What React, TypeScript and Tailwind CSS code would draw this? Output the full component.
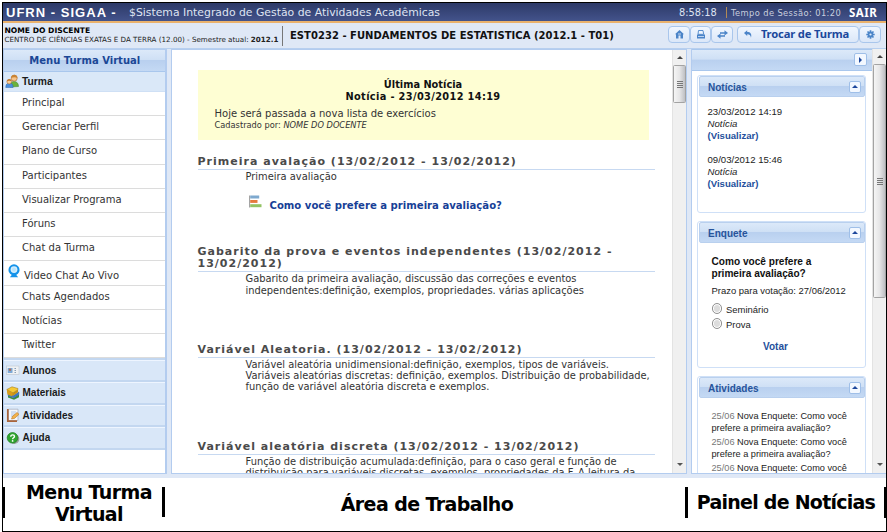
import type { ReactNode } from "react";

const SANS = "font-['Liberation_Sans',Arial,sans-serif]";

const menuTop = ["Principal", "Gerenciar Perfil", "Plano de Curso", "Participantes", "Visualizar Programa", "Fóruns", "Chat da Turma"];
const menuBottom = ["Chats Agendados", "Notícias", "Twitter"];

function MenuItem({ children }: { children: ReactNode }) {
  return (
    <li className="h-[24.2px] shrink-0 whitespace-nowrap border-b-[1.5px] border-[#dcdcdc] pl-[18px] text-[10px] leading-[22px] text-[#333]">
      {children}
    </li>
  );
}

function WebcamIcon() {
  return (
    <svg width="12" height="14" viewBox="0 0 13 15">
      <path d="M2 14.2 4.2 11.5h4.6l2.2 2.7z" fill="#1593ea" />
      <circle cx="6.5" cy="6.3" r="6" fill="#1593ea" />
      <circle cx="6.5" cy="6" r="3.7" fill="#d4eefd" />
      <circle cx="6.5" cy="6" r="2.3" fill="#b9e3fb" />
    </svg>
  );
}

function PeopleIcon() {
  return (
    <svg width="14" height="14" viewBox="0 0 14 14">
      <path d="M5 13c0-4 1.5-5.500 4-5.500s4.500 1.500 4.500 5z" fill="#6bb23c" stroke="#3f8228" strokeWidth=".5" />
      <circle cx="9.200" cy="4.200" r="3" fill="#f7c489" stroke="#a7652d" strokeWidth=".6" />
      <path d="M6 4c0-4.500 6.500-4.500 6.500 0C11 3 8 3 6 4z" fill="#c98434" />
      <path d="M.8 13.600c0-3.500 1.500-4.500 3.600-4.500s3.700 1 3.700 4.500z" fill="#4b8fdd" stroke="#2b62a8" strokeWidth=".5" />
      <circle cx="4.200" cy="7.700" r="2.300" fill="#f9cd98" stroke="#a7652d" strokeWidth=".5" />
      <path d="M1.800 7.500c0-3.500 5-3.500 5 0-1.500-.9-3.500-.9-5 0z" fill="#c77a2b" />
    </svg>
  );
}

function CardIcon() {
  return (
    <svg width="14" height="14" viewBox="0 0 14 14">
      <rect x=".5" y="3" width="12.500" height="8.500" fill="#eef1f4" stroke="#c3cbd4" strokeWidth=".7" />
      <rect x="1.700" y="5" width="4.800" height="5" fill="#7da9d6" />
      <circle cx="4" cy="6.800" r="1.200" fill="#b0705b" />
      <path d="M8.500 5.500h1.500M8.500 7.500h1.500M8.500 9.500h1.500" stroke="#7c93ad" strokeWidth=".9" />
    </svg>
  );
}

function BooksIcon() {
  return (
    <svg width="14" height="14" viewBox="0 0 14 14">
      <path d="M2 9.500 7.500 12 13 8.500v2.800L8 13.800 2 11.500z" fill="#3c8f3d" />
      <path d="M2 7 7.500 9.500 12.800 6v2.700L7.800 12 2 9.500z" fill="#3c78c4" stroke="#235291" strokeWidth=".4" />
      <path d="M.8 3.500 7 6.800 12 3.500v2.800L7.500 9.500 1.500 7z" fill="#c99210" />
      <path d="M.8 3.500 6 .8l6 1.700v1L7 6.800z" fill="#f5c935" stroke="#9d7010" strokeWidth=".5" />
      <path d="M.8 3.500 1.500 8.500 6.500 10.500V6.800z" fill="#d79d19" />
    </svg>
  );
}

function NotepadIcon() {
  return (
    <svg width="14" height="14" viewBox="0 0 14 14">
      <path d="M2.500 1.200h9.500v11.300H2.500z" fill="#f4f6fa" stroke="#a9b3c2" strokeWidth=".8" />
      <path d="M1.800 1v12.200h9.200" fill="none" stroke="#a9643b" strokeWidth="1.700" />
      <path d="M5 4h5M5 6h4M5 8h3" stroke="#9dbce4" strokeWidth=".8" />
      <path d="M5.500 11 6.500 8.300 11 4.500l2 1.800L8.500 10.400z" fill="#f3b34b" stroke="#bb7928" strokeWidth=".6" />
    </svg>
  );
}

function HelpIcon() {
  return (
    <svg width="14" height="14" viewBox="0 0 14 14">
      <circle cx="8.300" cy="8" r="5" fill="#98a19a" />
      <circle cx="6.500" cy="6.800" r="5.300" fill="#2fa52f" stroke="#1f7d22" strokeWidth=".7" />
      <path d="M4.800 5.700c0-2.600 3.700-2.300 3.700-.2 0 1.300-1.900 1.300-1.900 2.700" fill="none" stroke="#fff" strokeWidth="1.400" />
      <circle cx="6.600" cy="9.900" r=".85" fill="#fff" />
    </svg>
  );
}

function PollIcon() {
  return (
    <svg width="13" height="13" viewBox="0 0 13 13">
      <path d="M.6.500v12" stroke="#8e8e8e" strokeWidth=".9" />
      <rect x="1.200" y=".5" width="9" height="3" fill="#7ea9cf" />
      <rect x="1.200" y="5" width="7.300" height="2.900" fill="#e5793c" />
      <rect x="1.200" y="9.200" width="11.300" height="3" fill="#93c364" />
    </svg>
  );
}

function Accordion({ icon, label }: { icon: ReactNode; label: string }) {
  return (
    <div className={`flex h-[22.5px] shrink-0 items-center border-t-[1.5px] border-b-2 border-t-[#eef5ff] border-b-[#c3d7f0] bg-[#d9e7f8] pl-[2px] text-[10px] font-bold text-[#1b1b1b] ${SANS}`}>
      <span className="w-[16.5px]">{icon}</span>
      <span className="whitespace-nowrap">{label}</span>
    </div>
  );
}

function Scrollbar({ thumb }: { thumb: string }) {
  return (
    <div className="flex w-[14px] shrink-0 flex-col items-center border-l border-[#e3e3e3] bg-[#f0f0f0]">
      <div className="flex h-[15px] w-full shrink-0 items-center justify-center">
        <svg width="6" height="3" viewBox="0 0 6 3"><path d="M0 3 3 0l3 3z" fill="#444" /></svg>
      </div>
      <div className={`flex w-[13px] shrink-0 flex-col items-center justify-center gap-px rounded-[1.5px] border border-[#a3a3a3] bg-gradient-to-r from-[#f5f5f5] via-[#e6e6e7] to-[#bfc0c4] ${thumb}`}>
        {[0, 1, 2, 3].map((i) => (
          <span key={i} className="h-px w-[6px] bg-[#777]" />
        ))}
      </div>
      <div className="flex-1" />
      <div className="flex h-[16px] w-full shrink-0 items-center justify-center">
        <svg width="6" height="3" viewBox="0 0 6 3"><path d="M0 0h6L3 3z" fill="#555" /></svg>
      </div>
    </div>
  );
}

const HEADER_BG = "bg-[linear-gradient(to_bottom,#dce9f9_0%,#cfe0f5_46%,#b9d0ef_50%,#c4d9f4_100%)]";

function Card({ title, className, children }: { title: string; className: string; children?: ReactNode }) {
  return (
    <section className={`shrink-0 overflow-hidden rounded-[3px] border-[1.5px] border-[#cfe0f7] bg-white ${className}`}>
      <h3 className={`mx-[0.5px] mt-[0.5px] flex h-[21px] items-center rounded-[2px] border border-[#b9d0ee] pl-[8.5px] pr-[3px] text-[10px] font-bold text-[#27549b] ${HEADER_BG} ${SANS}`}>
        <span className="flex-1 pt-px">{title}</span>
        <span className="flex h-[12px] w-[12px] items-center justify-center rounded-[2px] border border-[#9fbfe8] bg-[#f3f8ff]">
          <svg width="6" height="3" viewBox="0 0 6 3"><path d="M0 3 3 0l3 3z" fill="#1d479c" /></svg>
        </span>
      </h3>
      {children}
    </section>
  );
}

function ToolButton({ children, className }: { children: ReactNode; className: string }) {
  return (
    <span className={`flex h-[17.5px] shrink-0 items-center justify-center rounded-[4px] border border-[#a9c6ec] bg-gradient-to-b from-[#f0f6ff] to-[#dbe7f8] ${className}`}>
      {children}
    </span>
  );
}

function Section({ title, className, children }: { title: ReactNode; className: string; children: ReactNode }) {
  return (
    <section className={`shrink-0 ${className}`}>
      <h2 className="whitespace-nowrap border-b border-[#c7d9f1] pb-px text-[11px] font-bold leading-[12.2px] tracking-[1.01px] text-[#4a4a4a]">{title}</h2>
      <div className="whitespace-nowrap pl-[48px] pt-px text-[9.9px] leading-[11.2px] text-[#333]">{children}</div>
    </section>
  );
}

function Activity() {
  return (
    <p className="h-[26px]">
      <span className="text-[#777]">25/06</span> Nova Enquete: Como você<br />prefere a primeira avaliação?
    </p>
  );
}

export default function App() {
  return (
    <div className="h-[532px] w-[887px] overflow-hidden bg-white pl-[2px] pt-[2px] font-['DejaVu_Sans',Verdana,sans-serif]">
      <div className="flex h-[530px] w-[885px] flex-col border-[1.5px] border-black">
        <header className="flex h-[17.5px] shrink-0 items-center whitespace-nowrap bg-gradient-to-b from-[#2d3a68] to-[#43538b] pt-[2px] text-white">
          <b className={`w-[126px] pl-[3px] text-[13px] tracking-[1.02px] ${SANS}`}>UFRN - SIGAA -</b>
          <span className="flex-1 pt-px text-[10.85px] text-[#dfe4f2]">$Sistema Integrado de Gestão de Atividades Acadêmicas</span>
          <span className="w-[47px] pt-px text-[9.8px] text-[#dfe4f2]">8:58:18</span>
          <span className="h-[11px] w-[5px] border-l border-[#b28a55]" />
          <span className="w-[118px] pt-px text-[8.3px] tracking-[0.4px] text-[#c9cfdf]">Tempo de Sessão: 01:20</span>
          <b className="w-[37px] font-['Noto_Sans',sans-serif] text-[11.5px] leading-[14px] tracking-[0.5px]">SAIR</b>
        </header>
        <div className="h-[2px] shrink-0 bg-[#eab26d]" />

        <div className="flex h-[26.5px] shrink-0 items-start border-b border-[#b7cfef] bg-[#dfe8f6] pt-[3px]">
          <div className="h-[20px] w-[280px] shrink-0 whitespace-nowrap border-r border-[#777] pl-[1.5px] text-[#222]">
            <div className="text-[7.6px] font-bold leading-[9px] text-black">NOME DO DISCENTE</div>
            <div className="text-[7.15px] leading-[10px]">CENTRO DE CIÊNCIAS EXATAS E DA TERRA (12.00) - Semestre atual: <b>2012.1</b></div>
          </div>
          <div className="flex-1 whitespace-nowrap pl-[7px] text-[10px] font-bold leading-[20px] tracking-[0.03px] text-[#111]">EST0232 - FUNDAMENTOS DE ESTATISTICA (2012.1 - T01)</div>
          <div className="flex pr-[5px]">
            <ToolButton className="w-[22px]">
              <svg width="9" height="9" viewBox="0 0 9 9"><path d="M4.500 0 0 4.200h1V8.500h2.500V5.500h2v3H8V4.200h1z" fill="#4b84c8" /><path d="M3 4h3" stroke="#eaf2fd" strokeWidth=".8" /></svg>
            </ToolButton>
            <ToolButton className="w-[21px]">
              <svg width="10" height="9" viewBox="0 0 10 9"><path d="M2.500.500h4.500l.7 3.800H2z" fill="#eef5ff" stroke="#4b84c8" strokeWidth=".9" /><path d="M1 4.500h8V8.500H1z" fill="#4b84c8" /><path d="M2 6.500h6" stroke="#dce9fa" strokeWidth=".8" /></svg>
            </ToolButton>
            <ToolButton className="mr-[4px] w-[22px]">
              <svg width="11" height="9" viewBox="0 0 11 9"><path d="M3 2.200h4.500V.3L11 3 7.500 5.500V3.800H3zM8 6.800H3.500V8.700L0 6l3.500-2.500v1.700H8z" fill="#4b84c8" /></svg>
            </ToolButton>
            <ToolButton className="w-[122px] gap-[9px] whitespace-nowrap pr-[3px]">
              <svg width="8" height="8" viewBox="0 0 8 8"><path d="M0 3 3.200.3v1.800C6.500 2.100 8 4 7 7.700 6.500 5.200 5.500 4.300 3.200 4.300V6z" fill="#4b84c8" /></svg>
              <b className="font-['Noto_Sans',sans-serif] text-[11.200px] tracking-[-0.15px] text-[#1b489c]">Trocar de Turma</b>
            </ToolButton>
            <ToolButton className="w-[22px]">
              <svg width="9" height="9" viewBox="0 0 9 9"><path d="M4.500.3v8.400M.3 4.500h8.400M1.500 1.500l6 6M7.500 1.500l-6 6" stroke="#4b84c8" strokeWidth="1.700" /><circle cx="4.500" cy="4.500" r="2.900" fill="#4b84c8" /><circle cx="4.500" cy="4.500" r="1.100" fill="#e4eefb" /></svg>
            </ToolButton>
          </div>
        </div>

        <main className="flex h-[428.5px] shrink-0 gap-[4px] bg-[#dfe8f6] pb-[4px]">
          <aside className="flex w-[163.5px] shrink-0 flex-col border border-r-2 border-[#b3ccef] bg-white">
            <h2 className={`flex h-[21.5px] shrink-0 items-center justify-center border-b border-[#a9c7ed] pl-px text-[10px] font-bold text-[#1b4796] ${HEADER_BG}`}>Menu Turma Virtual</h2>
            <div className={`flex h-[20.5px] shrink-0 items-center border-b border-[#cfe0f5] bg-[#dae8f8] text-[10.3px] font-bold text-[#1b1b1b] ${SANS}`}>
              <span className="w-[18px] pl-[0.5px]"><PeopleIcon /></span><span className="pt-px">Turma</span>
            </div>
            <ul className="flex flex-col">
              {menuTop.map((m) => <MenuItem key={m}>{m}</MenuItem>)}
              <li className="flex h-[24.2px] border-b-[1.5px] border-[#dcdcdc] pl-[3.5px] text-[10px] leading-[30px] text-[#333]">
                <span className="w-[16.5px] pt-[3px]"><WebcamIcon /></span>Video Chat Ao Vivo
              </li>
              {menuBottom.map((m) => <MenuItem key={m}>{m}</MenuItem>)}
            </ul>
            <div className="h-[1.5px] shrink-0 bg-[#c3d7f0]" />
            <Accordion icon={<CardIcon />} label="Alunos" />
            <Accordion icon={<BooksIcon />} label="Materiais" />
            <Accordion icon={<NotepadIcon />} label="Atividades" />
            <Accordion icon={<HelpIcon />} label="Ajuda" />
          </aside>

          <div className="flex w-[516.5px] shrink-0 overflow-hidden border border-[#b3ccef] bg-white">
            <div className="flex h-full flex-1 flex-col overflow-hidden pl-[26px] pr-[17px]">
              <div className="mt-[20px] h-[70px] w-[451px] shrink-0 whitespace-nowrap bg-[#fefed3] pt-[8.5px]">
                <div className="text-center text-[9.8px] font-bold leading-[12.3px] text-[#111]">Última Notícia<br /><span className="tracking-[0.35px]">Notícia - 23/03/2012 14:19</span></div>
                <div className="pl-[17px] pt-[4.5px] text-[10px] leading-[12.5px] text-[#333]">Hoje será passada a nova lista de exercícios</div>
                <div className="pl-[17px] text-[8.25px] leading-[11px] text-[#333]">Cadastrado por: <i>NOME DO DOCENTE</i></div>
              </div>
              <Section className="mt-[15.5px] h-[90.5px]" title="Primeira avalação (13/02/2012 - 13/02/2012)">
                Primeira avaliação
                <div className="flex pl-[3px] pt-[13px]">
                  <PollIcon />
                  <b className="pl-[8px] pt-[5px] text-[10.1px] text-[#173f97]">Como você prefere a primeira avaliação?</b>
                </div>
              </Section>
              <Section className="h-[97.5px]" title={<>Gabarito da prova e eventos independentes (13/02/2012 -<br />13/02/2012)</>}>
                Gabarito da primeira avaliação, discussão das correções e eventos<br />independentes:definição, exemplos, propriedades. várias aplicações
              </Section>
              <Section className="h-[97px]" title="Variável Aleatoria. (13/02/2012 - 13/02/2012)">
                Variável aleatória unidimensional:definição, exemplos, tipos de variáveis.<br />Variáveis aleatórias discretas: definição, exemplos. Distribuição de probabilidade,<br />função de variável aleatória discreta e exemplos.
              </Section>
              <Section className="h-[60px]" title="Variável aleatória discreta (13/02/2012 - 13/02/2012)">
                Função de distribuição acumulada:definição, para o caso geral e função de<br />distribuição para variáveis discretas, exemplos, propriedades da F. A leitura da
              </Section>
            </div>
            <Scrollbar thumb="h-[38px]" />
          </div>

          <div className="flex flex-1 overflow-hidden border-b border-l border-[#b3ccef] bg-white">
            <div className="flex flex-1 flex-col overflow-hidden">
              <div className={`flex h-[21.5px] shrink-0 items-center justify-end border-y border-[#a9c7ed] pr-[5px] ${HEADER_BG}`}>
                <span className="flex h-[13px] w-[13px] items-center justify-center rounded-[2px] border border-[#9fbfe8] bg-[#f3f8ff]">
                  <svg width="3" height="6" viewBox="0 0 3 6"><path d="M0 0v6l3-3z" fill="#1d479c" /></svg>
                </span>
              </div>
              <div className={`flex flex-col pl-[5px] pt-[4px] text-[#222] ${SANS}`}>
                <Card title="Notícias" className="h-[138px] w-[169px]">
                  <div className="pl-[9.5px] pt-[8.5px] text-[9.6px] leading-[12.15px]">
                    23/03/2012 14:19<br /><i>Notícia</i><br /><b className="text-[#24509c]">(Visualizar)</b><br /><br />
                    09/03/2012 15:46<br /><i>Notícia</i><br /><b className="text-[#24509c]">(Visualizar)</b>
                  </div>
                </Card>
                <Card title="Enquete" className="mt-[8px] h-[147px] w-[169px]">
                  <div className="whitespace-nowrap pl-[13.5px] pt-[13px] text-[9.45px] leading-[12px]">
                    <b className="text-[10.1px] text-[#111]">Como você prefere a<br />primeira avaliação?</b>
                    <div className="pt-[5px]">Prazo para votação: 27/06/2012</div>
                    {["Seminário", "Prova"].map((o, i) => (
                      <div key={o} className={`flex h-[15px] items-center gap-[4px] ${i === 0 ? "mt-[4px]" : ""}`}>
                        <span className="h-[10.5px] w-[10.5px] rounded-full border border-[#929292] bg-[#dcdcdc] shadow-[inset_0_0_0_1px_#fff]" />
                        <span className="pt-[3px]">{o}</span>
                      </div>
                    ))}
                    <b className="block w-[128px] pt-[10px] text-center text-[10px] text-[#24509c]">Votar</b>
                  </div>
                </Card>
                <Card title="Atividades" className="mt-[8px] h-[130px] w-[169px]">
                  <div className="whitespace-nowrap pl-[13.5px] pt-[12px] text-[9.2px] leading-[12.2px]">
                    <Activity /><Activity /><Activity />
                  </div>
                </Card>
              </div>
            </div>
            <Scrollbar thumb="h-[234px]" />
          </div>
        </main>

        <footer className="flex flex-1 items-start justify-between pt-[9px] text-[19px] font-bold tracking-[-0.6px] text-black">
          <div className="h-[31px] w-[2px] bg-black" />
          <div className="-mt-[6px] h-[44px] w-[157px] whitespace-nowrap pl-[11px] text-center leading-[22px]">Menu Turma<br />Virtual</div>
          <div className="h-[30px] w-[3px] bg-black" />
          <div className="flex-1 whitespace-nowrap pl-[4px] pt-[5px] text-center leading-[24px]">Área de Trabalho</div>
          <div className="h-[31px] w-[3px] bg-black" />
          <div className="w-[196px] whitespace-nowrap pt-[2px] text-center leading-[26px] tracking-[-0.75px]">Painel de Notícias</div>
          <div className="h-[31px] w-[2px] bg-black" />
        </footer>
      </div>
    </div>
  );
}
